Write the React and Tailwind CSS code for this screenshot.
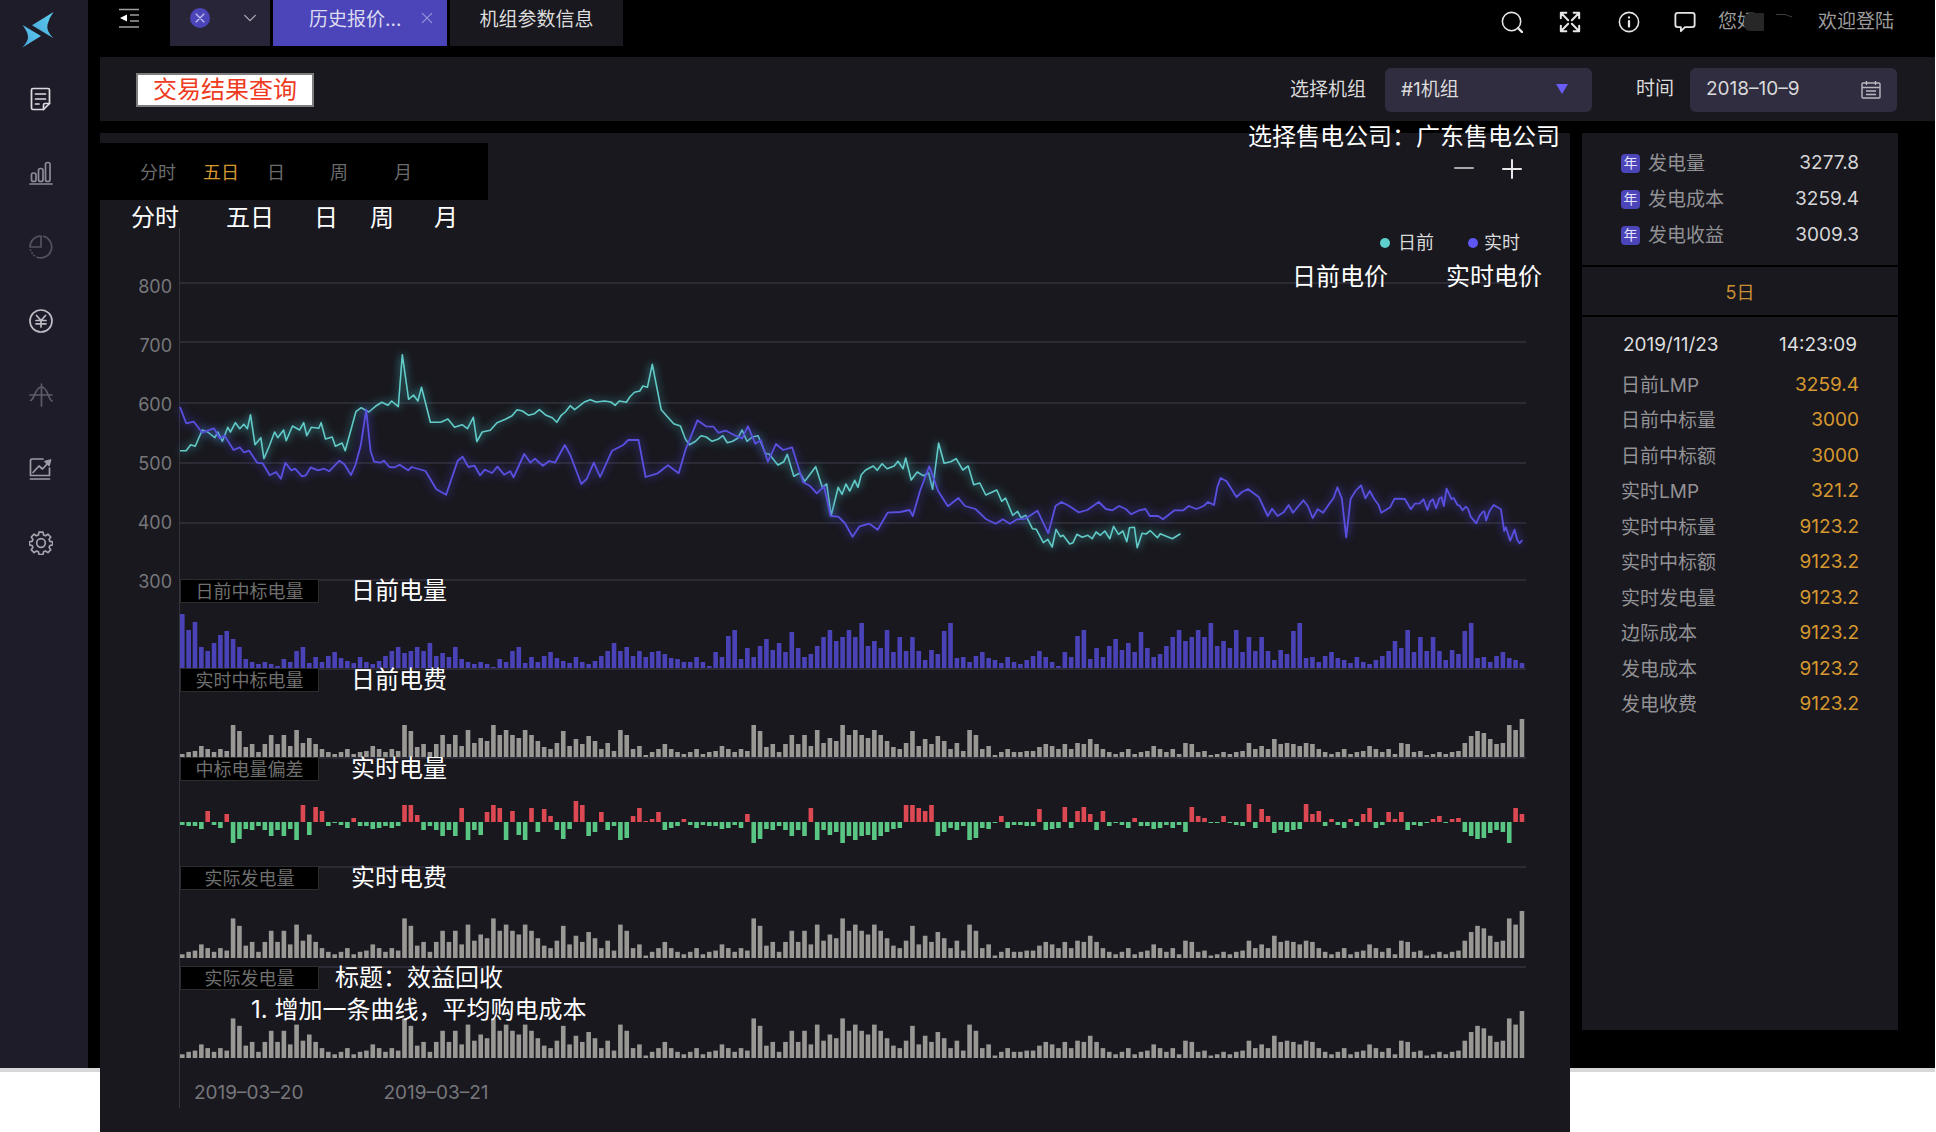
import React from "react";

/* ---------- chart data ---------- */

const dayAheadVolume = [
  54, 38, 46, 21, 17, 25, 33, 37, 29, 21, 9, 6, 4, 6, 4, 2, 9, 6, 17, 21, 5, 11, 6, 12, 16, 10, 7, 5, 11, 6, 4, 7, 12, 17, 21, 15,
  17, 21, 17, 25, 12, 15, 11, 21, 9, 6, 4, 6, 4, 1, 9, 6, 17, 21, 5, 11, 6, 12, 16, 10, 7, 5, 11, 6, 4, 7, 12, 17, 25, 17, 21, 12,
  17, 11, 16, 17, 14, 10, 9, 6, 6, 11, 6, 2, 16, 11, 32, 38, 9, 20, 11, 22, 29, 18, 25, 16, 36, 20, 11, 14, 22, 31, 38, 27, 31, 38,
  31, 45, 22, 27, 20, 38, 16, 31, 17, 31, 17, 8, 18, 14, 37, 45, 10, 11, 6, 12, 16, 10, 8, 5, 11, 6, 4, 8, 12, 17, 11, 6, 2, 16,
  11, 32, 38, 9, 20, 11, 22, 29, 18, 25, 16, 36, 20, 11, 14, 22, 31, 38, 27, 31, 38, 31, 45, 22, 27, 20, 38, 16, 31, 17, 31, 17,
  8, 18, 14, 37, 45, 10, 11, 6, 12, 16, 10, 8, 5, 11, 6, 4, 8, 12, 17, 27, 20, 38, 16, 31, 17, 31, 17, 8, 18, 14, 37, 45, 10, 11,
  6, 12, 16, 10, 8, 5,
];

const actualVolume = [
  3, 5, 6, 11, 8, 5, 8, 6, 32, 26, 10, 13, 5, 13, 22, 13, 22, 11, 27, 14, 19, 13, 8, 5, 3, 5, 8, 3, 5, 6, 11, 8, 5, 8, 6, 32, 26,
  10, 13, 5, 13, 22, 13, 22, 11, 27, 14, 19, 16, 32, 22, 27, 22, 19, 27, 22, 16, 10, 8, 14, 26, 11, 18, 13, 21, 16, 8, 14, 6, 27,
  22, 8, 11, 2, 5, 8, 13, 8, 5, 3, 5, 8, 3, 5, 6, 11, 8, 5, 8, 6, 32, 26, 10, 13, 5, 13, 22, 13, 22, 11, 27, 14, 19, 16, 32, 22,
  27, 22, 19, 27, 22, 16, 10, 8, 14, 26, 11, 18, 13, 21, 16, 8, 14, 6, 27, 22, 8, 11, 2, 5, 8, 5, 5, 6, 6, 10, 13, 11, 8, 13, 8,
  14, 13, 18, 13, 8, 5, 3, 5, 8, 3, 5, 6, 11, 8, 5, 8, 3, 14, 13, 5, 6, 2, 3, 5, 3, 5, 6, 14, 8, 11, 8, 18, 13, 14, 13, 11, 14,
  13, 8, 5, 3, 5, 8, 3, 5, 6, 11, 8, 5, 8, 3, 14, 13, 5, 6, 2, 3, 5, 3, 5, 6, 14, 21, 26, 24, 18, 13, 14, 32, 27, 38,
];

const deviation = [
  -3, -4, -4, -7, 11, -3, -6, 8, -21, -17, -7, -8, -4, -8, -14, -8, -14, -7, -18, 17, -13, 15, 11, -4, -1, -3, -6, 4, -4, -4, -7,
  -6, -4, -6, -4, 17, 17, 7, -8, -4, -8, -14, -8, -14, 14, -18, -8, -13, 10, 17, 14, -18, 11, -13, -18, 14, -10, 13, 6, -8, -17,
  -7, 21, 17, -14, -10, 10, -8, -4, -18, -16, 6, 14, 1, 3, 10, -8, -6, -4, 3, -3, -6, -3, -4, -4, -7, -6, -3, -6, 8, -21, -17, -7,
  -8, -4, -8, -14, -8, -14, 14, -18, -8, -13, -10, -21, -14, -18, -14, -13, -18, -14, -10, -7, -6, 17, 17, 14, 11, 17, -14, -10,
  -6, -8, -4, -18, -16, -6, -7, -1, 6, -6, -3, -3, -4, -4, 13, -8, -7, -6, 15, -6, 11, 15, 8, -8, 11, -4, -1, -3, -6, 4, -4, -4,
  -7, -6, -3, -6, -3, -10, 15, 6, 4, -1, -1, 6, -1, -3, -4, 18, -6, 13, 6, -11, -8, -10, -8, -7, 18, 8, 11, -4, 3, -3, -6, 3, -4,
  8, 14, -6, -3, 10, 3, 10, -8, -3, -4, -1, 3, 6, -1, 3, 4, -10, -14, -17, -16, -11, -8, -10, -21, 14, 8,
];

const dayAheadPrice = {
  early: "179,692 193,692 203,674 213,679 229,630 241,636 257,653 264,636 274,664 286,622 292,636 303,608 313,626 322,613 330,626 337,584 347,674 360,653 367,716 379,678 391,636 398,653 411,630 417,662 431,618 447,630 456,608 463,647 473,622 490,625 495,608 505,657 520,651 527,679 542,669 549,692 573,575 585,563 602,576 617,559 631,547 645,556 653,543 668,560 677,404 691,538 702,525 712,543 720,502 740,607 763,607 779,597 794,622 811,614 823,626 836,592 844,665 856,636 874,631 889,608 908,598 923,587 934,569 946,573 960,586 973,581 984,569 999,586 1013,593 1023,607 1033,586 1042,576 1053,557 1063,569 1086,545 1098,539 1111,546 1130,543 1144,546 1154,556 1163,543 1179,547 1187,530 1197,517 1209,513 1216,498 1226,502 1237,433 1257,569 1285,611 1300,618 1311,657 1320,674 1334,664 1346,647 1358,651 1371,664 1384,658 1395,647 1405,668 1417,664 1428,655 1438,630 1449,664 1461,651 1474,647 1490,700",
  late: "122,701 126,702 142,735 153,725 159,703 171,769 182,759 191,784 211,740 223,802 231,792 239,887 252,802 259,823 266,792 273,813 282,781 288,802 294,764 302,750 316,738 323,751 332,731 341,746 354,738 361,724 370,746 375,714 385,780 396,756 407,767 417,759 424,808 435,669 445,730 457,725 467,716 479,750 489,738 499,794 510,789 521,825 541,810 550,844 557,834 570,886 579,874 585,893 594,886 606,926 613,928 626,968 634,958 642,981 649,928 657,950 662,946 674,972 680,968 687,943 697,952 707,946 715,956 722,936 730,946 738,933 747,956 754,919 763,943 771,933 778,965 783,923 792,922 797,983 806,940 813,942 821,932 834,953 839,941 861,956 876,941",
};

const realTimePrice = {
  early: "179,561 193,610 210,605 229,638 255,625 268,655 279,647 299,690 313,682 322,697 334,692 352,728 364,730 380,766 394,756 405,776 415,728 428,751 437,746 452,769 461,766 472,742 488,751 502,746 513,754 536,722 547,733 562,765 572,735 584,676 596,569 606,694 614,725 627,728 636,722 648,741 660,742 671,734 690,751 698,741 729,753 753,808 775,824 801,722 812,710 825,741 839,737 851,766 862,749 878,759 890,740 905,764 919,754 926,772 950,702 964,728 974,716 992,737 1006,723 1019,728 1041,675 1053,704 1078,792 1090,777 1106,728 1120,771 1147,692 1171,676 1183,660 1206,660 1222,771 1249,760 1272,736 1296,760 1311,690 1338,601 1357,619 1374,620 1385,638 1402,632 1420,645 1438,655 1451,619 1468,671 1480,661 1496,725 1514,672 1530,690 1550,682",
  late: "188,787 200,797 213,820 226,799 238,888 252,890 264,909 278,950 291,919 309,911 324,929 342,878 365,876 382,870 388,888 401,813 418,739 434,813 452,859 471,834 483,858 502,867 522,898 539,911 552,898 565,911 578,898 593,896 615,872 635,940 648,858 659,846 673,858 690,877 706,870 727,846 740,867 752,871 764,858 776,867 786,883 799,872 812,867 820,888 835,888 844,898 865,871 881,871 891,858 905,867 918,858 926,846 937,855 943,802 949,774 960,784 978,831 988,816 999,807 1019,832 1035,888 1043,866 1053,888 1064,877 1073,855 1081,878 1091,858 1100,841 1108,858 1117,894 1126,868 1136,878 1148,850 1155,834 1162,802 1170,835 1178,952 1186,837 1195,813 1205,796 1213,835 1221,813 1229,837 1237,855 1242,878 1258,862 1266,836 1285,837 1296,868 1303,851 1312,850 1319,838 1326,870 1331,845 1336,838 1342,865 1348,835 1352,832 1356,858 1361,806 1370,837 1374,834 1381,855 1385,857 1390,871 1396,860 1400,866 1405,890 1415,910 1421,888 1427,875 1430,875 1433,902 1439,874 1447,855 1460,868 1466,933 1469,922 1477,962 1485,929 1490,960 1494,970 1499,960",
};

function toPoints({ early, late }) {
  const map = (text, fx) =>
    text.split(" ").map((pair) => {
      const [x, y] = pair.split(",").map(Number);
      return `${fx(x).toFixed(1)},${(y / 3 - 8).toFixed(1)}`;
    });
  return [
    ...map(early, (x) => (x - 179) / 2.24),
    ...map(late, (x) => x / 1.823 + 520),
  ].join(" ");
}

const CHART_W = 1346;
const STEP = CHART_W / actualVolume.length;

/* ---------- charts ---------- */

function Bars({ data, max, fill, className }) {
  return (
    <svg viewBox={`0 0 ${CHART_W} ${max}`} preserveAspectRatio="none" className={`block w-full ${className}`} aria-hidden="true">
      {data.map((v, i) => (
        <rect key={i} x={i * STEP} y={max - v} width="4.6" height={v} fill={fill} />
      ))}
    </svg>
  );
}

function DeviationBars() {
  return (
    <svg viewBox={`0 0 ${CHART_W} 44`} preserveAspectRatio="none" className="block h-11 w-full" aria-hidden="true">
      {deviation.map((v, i) => (
        <rect key={i} x={i * STEP} y={v > 0 ? 22 - v : 22} width="4.6" height={Math.abs(v)} fill={v > 0 ? "#dd4952" : "#5ac683"} />
      ))}
    </svg>
  );
}

function PriceChart() {
  return (
    <svg viewBox={`0 0 ${CHART_W} 351`} preserveAspectRatio="none" className="block h-[351px] w-full overflow-visible" aria-hidden="true">
      {[55, 114, 175, 235, 295].map((y) => (
        <line key={y} x1="0" x2={CHART_W} y1={y} y2={y} stroke="#2b2a35" strokeWidth="2" />
      ))}
      <g className="drop-shadow-[0_0_4px_#3fb9b8]">
        <polyline points={toPoints(dayAheadPrice)} fill="none" stroke="#62cbc8" strokeWidth="1.6" strokeLinejoin="round" vectorEffect="non-scaling-stroke" />
      </g>
      <g className="drop-shadow-[0_0_4px_#4a40d0]">
        <polyline points={toPoints(realTimePrice)} fill="none" stroke="#5a50e0" strokeWidth="1.8" strokeLinejoin="round" vectorEffect="non-scaling-stroke" />
      </g>
    </svg>
  );
}

function ChartRow({ label, note, noteClass = "ml-8", className, children }) {
  return (
    <section className={`relative flex flex-col justify-end border-t-2 border-[#2b2a35] ${className}`}>
      <div className="absolute -top-0.5 left-0 z-10 flex h-6 items-center">
        <h3 className="flex h-6 w-[139px] items-center justify-center border border-[#2c2c2c] bg-black text-[18px] text-[#6f6f6f]">{label}</h3>
        <span className={`whitespace-nowrap text-2xl leading-6 text-white ${noteClass}`}>{note}</span>
      </div>
      {children}
    </section>
  );
}

/* ---------- icons ---------- */

const stroke = { fill: "none", stroke: "currentColor", strokeWidth: 1.7, strokeLinecap: "round", strokeLinejoin: "round" };

function Icon({ children, className = "size-6" }) {
  return (
    <svg viewBox="0 0 24 24" className={className} {...stroke} aria-hidden="true">
      {children}
    </svg>
  );
}

const navItems = [
  {
    name: "报表", color: "text-[#dcdce0]",
    icon: <><path d="M4 1.500h15a1.500 1.500 0 0 1 1.500 1.500v13.500l-6 6H4A1.500 1.500 0 0 1 2.500 21V3A1.500 1.500 0 0 1 4 1.500Z" /><path d="M20.500 16.500h-4.500a1.500 1.500 0 0 0-1.500 1.500v4.500M6.500 7h10M6.500 12h10M6.500 17h3.500" /></>,
  },
  {
    name: "统计", color: "text-[#8d8b95]",
    icon: <><rect x="2.500" y="12" width="4.500" height="8.500" rx="2" /><rect x="9.500" y="7.500" width="4.500" height="13" rx="2" /><rect x="16.500" y="1.500" width="4.500" height="19" rx="2" /><path d="M1 23h22" /></>,
  },
  {
    name: "占比", color: "text-[#54525e]",
    icon: <><path d="M12 1a11 11 0 0 0-11 11h11Z" /><path d="M14.500 1.300A11 11 0 1 1 8 22.300" /><path d="M1.500 15l.1.300M3 18l.2.300M5 20.500l.3.200" /></>,
  },
  {
    name: "交易", color: "text-[#bdbcc2]",
    icon: <><circle cx="12" cy="12" r="11" /><path d="M7.500 6.500L12 11.500l4.500-5M12 11.500V18M7 11.500h10M7 14.800h10" /></>,
  },
  {
    name: "曲线", color: "text-[#5d5b66]",
    icon: <><path d="M1 12h22M12.500 1v22M1.500 17.500C5.500 17 6 4 12.500 4S19 16.500 23 18" /></>,
  },
  {
    name: "走势", color: "text-[#9d9ba4]",
    icon: <><path d="M14 2H3a1.500 1.500 0 0 0-1.500 1.500v15h19V11M1.500 22h19" /><path d="M4 15.500L10 9l3.500 3L19 6" /><path d="M16 4.500l5.500-1.500-1.500 5.500Z" fill="currentColor" /></>,
  },
  {
    name: "设置", color: "text-[#a5a3ab]",
    icon: <><circle cx="12" cy="12" r="4.300" /><path d="M10 1.200h4l.6 2.800 1.900.8 2.400-1.600 2.800 2.800-1.600 2.400.8 1.900 2.800.6v3l-2.800.6-.8 1.900 1.600 2.400-2.800 2.800-2.400-1.600-1.900.8-.6 2.800h-4l-.6-2.800-1.900-.8-2.400 1.600-2.800-2.800 1.600-2.400-.8-1.900-2.800-.6v-3l2.800-.6.8-1.900-1.600-2.400 2.800-2.800 2.400 1.600 1.900-.8Z" /></>,
  },
];

function Sidebar() {
  return (
    <nav className="flex w-[88px] shrink-0 flex-col items-center bg-[#1f1c29] pr-1.5">
      <a href="#home" aria-label="首页" className="mr-1.5 mt-2.5 block">
        <svg viewBox="20 10 36 40" className="h-10 w-9" aria-hidden="true">
          <defs>
            <linearGradient id="logo" x1="0" y1="1" x2="1" y2="0">
              <stop offset="0" stopColor="#4ba3dc" />
              <stop offset="1" stopColor="#5bd0ee" />
            </linearGradient>
          </defs>
          <path d="M53.500 12L32 25.200 53.500 38.300Q46 31 47.500 24.500Q49 18 53.500 12Z" fill="url(#logo)" />
          <path d="M22.500 25L41 36 22.500 47.500Q28 41 28 37.500Q28 32 22.500 25Z" fill="url(#logo)" />
        </svg>
      </a>
      <ul className="mt-[37px] flex flex-col gap-[50px]">
        {navItems.map((item) => (
          <li key={item.name} className="h-6">
            <button type="button" aria-label={item.name} className={`block ${item.color}`}>
              <Icon>{item.icon}</Icon>
            </button>
          </li>
        ))}
      </ul>
    </nav>
  );
}

function TopBar() {
  return (
    <header className="flex h-[57px] items-start">
      <button type="button" aria-label="收起菜单" className="ml-[18px] mt-2 text-[#a0a0a0]">
        <svg viewBox="0 0 22 20" className="h-5 w-[22px]" fill="none" stroke="currentColor" strokeWidth="1.700" aria-hidden="true">
          <path d="M1 1.500h20M12 7h9M12 13h9M1 19h20" />
          <path d="M2 10l7-3.500v7Z" fill="#fff" stroke="none" />
        </svg>
      </button>
      <div className="ml-[30px] flex gap-[3px]">
        <div className="flex h-[46px] w-[100px] items-start justify-between bg-[#282539] pl-5 pr-3">
          <button type="button" aria-label="关闭全部" className="mt-2 flex size-5 items-center justify-center rounded-full bg-[#4b45b9] text-[#c9c8ee]">
            <Icon className="size-4"><path d="M6 6l12 12M18 6L6 18" /></Icon>
          </button>
          <button type="button" aria-label="更多标签" className="mt-2.5 text-[#b5b4bd]">
            <Icon className="size-4"><path d="M4 8l8 8 8-8" /></Icon>
          </button>
        </div>
        <div className="flex h-[46px] w-[174px] items-start justify-between bg-[#4b45b9] pl-9 pr-3">
          <button type="button" className="text-[19px] leading-10 text-[#dddcf0]">历史报价...</button>
          <button type="button" aria-label="关闭标签" className="mt-2.5 text-[#9a96d8]">
            <Icon className="size-4"><path d="M5 5l14 14M19 5L5 19" /></Icon>
          </button>
        </div>
        <button type="button" className="block h-[46px] w-[173px] bg-[#19181f] pb-1.5 text-[19px] leading-10 text-[#dcdcdc]">机组参数信息</button>
      </div>
      <div className="ml-auto flex h-[43px] items-center pr-[41px] text-[#e6e6e6]">
        <button type="button" aria-label="搜索"><Icon className="size-[22px]"><circle cx="11.500" cy="11.500" r="10" /><path d="M18.500 18.500L23 23" strokeWidth="2.500" /></Icon></button>
        <button type="button" aria-label="全屏" className="ml-9">
          <Icon className="size-[22px]"><path d="M2 8V2h6M2 2l8 8M16 2h6v6M22 2l-8 8M2 16v6h6M2 22l8-8M22 16v6h-6M22 22l-8-8" strokeWidth="2.200" /></Icon>
        </button>
        <button type="button" aria-label="信息" className="ml-[37px]">
          <Icon className="size-[22px]"><circle cx="12" cy="12" r="10.500" /><path d="M12 11v6M12 7v.2" strokeWidth="2.500" /></Icon>
        </button>
        <button type="button" aria-label="消息" className="ml-[34px]">
          <Icon className="size-[22px]"><path d="M4 2h16a2.500 2.500 0 0 1 2.500 2.500V15a2.500 2.500 0 0 1-2.500 2.500h-8L7.500 22v-4.500H4A2.500 2.500 0 0 1 1.500 15V4.500A2.500 2.500 0 0 1 4 2Z" strokeWidth="2" /></Icon>
        </button>
        <span className="ml-[22px] text-[19px] leading-6 text-[#9b9b9b]">您好</span>
        <span className="-ml-3 h-[18px] w-5 rounded-l-md bg-[#272727]" />
        <svg viewBox="0 0 30 18" className="h-[18px] w-[30px]" fill="none" stroke="#3d3d3d" aria-hidden="true">
          <path d="M12 1.500h9l7 2.500" />
        </svg>
        <a href="#login" className="ml-6 text-[19px] leading-6 text-[#9b9b9b]">欢迎登陆</a>
      </div>
    </header>
  );
}

function FilterBar() {
  return (
    <form className="flex h-16 items-center bg-[#19181f] pl-9 pr-[38px] pt-px text-[19px] text-[#dadada]">
      <h1 className="flex h-[34px] w-[178px] items-center justify-center border-2 border-[#7d7d7d] bg-white text-2xl text-[#ee3b22]">交易结果查询</h1>
      <label htmlFor="unit" className="ml-auto pt-0.5">选择机组</label>
      <div className="relative ml-[19px] h-11 w-[207px]">
        <select id="unit" className="h-11 w-full appearance-none rounded-md bg-[#302d40] px-4 pt-0.5 text-[19px] text-[#dadada]">
          <option>#1机组</option>
        </select>
        <svg viewBox="0 0 12 10" className="pointer-events-none absolute right-6 top-4 h-2.5 w-3" aria-hidden="true">
          <path d="M0 0h12L6 10Z" fill="#6a5df5" />
        </svg>
      </div>
      <label htmlFor="date" className="ml-11">时间</label>
      <div className="ml-4 flex h-11 w-[207px] items-center rounded-md bg-[#302d40] px-4">
        <input id="date" type="text" defaultValue="2018–10–9" className="w-full min-w-0 bg-transparent text-[19px] outline-none" />
        <button type="button" aria-label="选择日期" className="text-[#b9b8bf]">
          <svg viewBox="0 0 20 18" className="h-[18px] w-5" fill="none" stroke="currentColor" strokeWidth="1.400" aria-hidden="true">
            <rect x="1" y="2" width="18" height="15" rx="1" />
            <path d="M1 6.500h18M5.500 0v4M14.500 0v4M5 10h10M5 13.500h10" />
          </svg>
        </button>
      </div>
    </form>
  );
}

/* ---------- main chart card ---------- */

function ChartCard() {
  return (
    <main className="relative z-10 -mb-16 min-w-0 flex-1 bg-[#19181f] pt-2.5">
      <div className="absolute -top-2.5 right-2.5 whitespace-nowrap text-2xl leading-7 text-white">选择售电公司：广东售电公司</div>
      <div className="flex h-[57px] items-stretch justify-between">
        <div className="flex w-[388px] items-center bg-black pl-10 pt-0.5 text-[18px] text-[#6b6b6b]">
          <button type="button">分时</button>
          <button type="button" className="ml-[27px] text-[#d7982f]">五日</button>
          <button type="button" className="ml-7">日</button>
          <button type="button" className="ml-[45px]">周</button>
          <button type="button" className="ml-[46px]">月</button>
        </div>
        <div className="flex items-start gap-7 pr-12 pt-4 text-[#e8e8e8]">
          <button type="button" aria-label="缩小" className="text-[#a8a8a8]"><svg viewBox="0 0 20 20" className="size-5" {...stroke} strokeWidth="2"><path d="M1 9h18" /></svg></button>
          <button type="button" aria-label="放大"><svg viewBox="0 0 20 20" className="size-5" {...stroke} strokeWidth="2"><path d="M1 10h18M10 1v18" /></svg></button>
        </div>
      </div>
      <div className="flex h-7 pl-[31px] text-2xl leading-9 text-white">
        <span>分时</span>
        <span className="ml-[47px]">五日</span>
        <span className="ml-10">日</span>
        <span className="ml-8">周</span>
        <span className="ml-10">月</span>
      </div>

      <div className="flex pr-11">
        <div className="w-[79px] shrink-0 pr-[7px] pt-[29px] text-right text-[18px] text-[#77777b]">
          {[800, 700, 600, 500, 400, 300].map((v) => (
            <div key={v} className="flex h-[59px] items-center justify-end">{v}</div>
          ))}
        </div>
        <div className="relative min-w-0 flex-1 border-l border-[#34333e]">
          <div className="absolute -right-4 top-0 z-10">
            <div className="flex items-center justify-end pr-[22px] text-[18px] leading-[30px] text-[#dadada]">
              <i className="mr-2 size-2.5 rounded-full bg-[#5fcfcb]" />日前
              <i className="ml-[34px] mr-1.5 size-2.5 rounded-full bg-[#5f56f5]" />实时
            </div>
            <div className="mt-0.5 flex gap-[58px] text-2xl leading-[34px] text-white">
              <span>日前电价</span>
              <span>实时电价</span>
            </div>
          </div>
          <PriceChart />
          <ChartRow label="日前中标电量" note="日前电量" className="h-[89px]">
            <Bars data={dayAheadVolume} max={54} fill="#4a43b8" className="h-[54px]" />
          </ChartRow>
          <ChartRow label="实时中标电量" note="日前电费" className="h-[89px]">
            <Bars data={actualVolume} max={38} fill="#999895" className="h-[38px]" />
          </ChartRow>
          <ChartRow label="中标电量偏差" note="实时电量" className="h-[109px] pb-[22px]">
            <DeviationBars />
          </ChartRow>
          <ChartRow label="实际发电量" note="实时电费" className="h-[100px] pb-2">
            <Bars data={actualVolume} max={38} fill="#999895" className="h-[47px]" />
          </ChartRow>
          <ChartRow label="实际发电量" note="标题：效益回收" noteClass="ml-4" className="h-[92px]">
            <p className="absolute left-[71px] top-[26px] z-10 whitespace-nowrap text-2xl text-white">1. 增加一条曲线，平均购电成本</p>
            <Bars data={actualVolume} max={38} fill="#999895" className="h-[47px]" />
          </ChartRow>
          <div className="flex gap-20 pl-3.5 pt-5 text-[19px] leading-[30px] text-[#77777b]">
            <span>2019–03–20</span>
            <span>2019–03–21</span>
          </div>
        </div>
      </div>
      <div className="h-6" />
    </main>
  );
}

/* ---------- summary panel ---------- */

const yearly = [["发电量", "3277.8"], ["发电成本", "3259.4"], ["发电收益", "3009.3"]];
const details = [
  ["日前LMP", "3259.4"], ["日前中标量", "3000"], ["日前中标额", "3000"], ["实时LMP", "321.2"], ["实时中标量", "9123.2"],
  ["实时中标额", "9123.2"], ["实时发电量", "9123.2"], ["边际成本", "9123.2"], ["发电成本", "9123.2"], ["发电收费", "9123.2"],
];

function SummaryPanel() {
  return (
    <aside className="mb-[38px] ml-3 w-[316px] shrink-0 bg-[#19181f] text-[19px]">
      <dl className="border-b-2 border-black px-[39px] pb-3 pt-3">
        {yearly.map(([name, value]) => (
          <div key={name} className="flex h-9 items-center">
            <span className="flex size-[19px] items-center justify-center rounded-sm bg-[#4b45b9] text-[14px] leading-none text-[#e4e3fa]">年</span>
            <dt className="ml-2 pt-0.5 text-[#929295]">{name}</dt>
            <dd className="ml-auto text-[#d6d6d6]">{value}</dd>
          </div>
        ))}
      </dl>
      <h2 className="flex h-[50px] items-center justify-center border-b-2 border-black pt-0.5 text-[18px] text-[#c98f33]">5日</h2>
      <div className="px-[39px] pt-2.5">
        <div className="flex h-9 items-center justify-between px-0.5 text-[19px] text-[#dedede]">
          <span>2019/11/23</span>
          <span>14:23:09</span>
        </div>
        <dl className="mt-1 grid h-[355px] grid-rows-10">
          {details.map(([name, value]) => (
            <div key={name} className="flex items-center justify-between">
              <dt className="pt-0.5 text-[#929295]">{name}</dt>
              <dd className="text-[#d7982f]">{value}</dd>
            </div>
          ))}
        </dl>
      </div>
    </aside>
  );
}

export default function App() {
  return (
    <div className="min-h-screen overflow-x-hidden bg-white pb-[60px] font-['Inter','Noto_Sans_CJK_SC',sans-serif]">
      <div className="mr-px flex border-b-4 border-[#d8d8da] bg-black">
        <Sidebar />
        <div className="min-w-0 flex-1 pl-3">
          <TopBar />
          <FilterBar />
          <div className="mt-3 flex pr-[37px]">
            <ChartCard />
            <SummaryPanel />
          </div>
        </div>
      </div>
    </div>
  );
}
